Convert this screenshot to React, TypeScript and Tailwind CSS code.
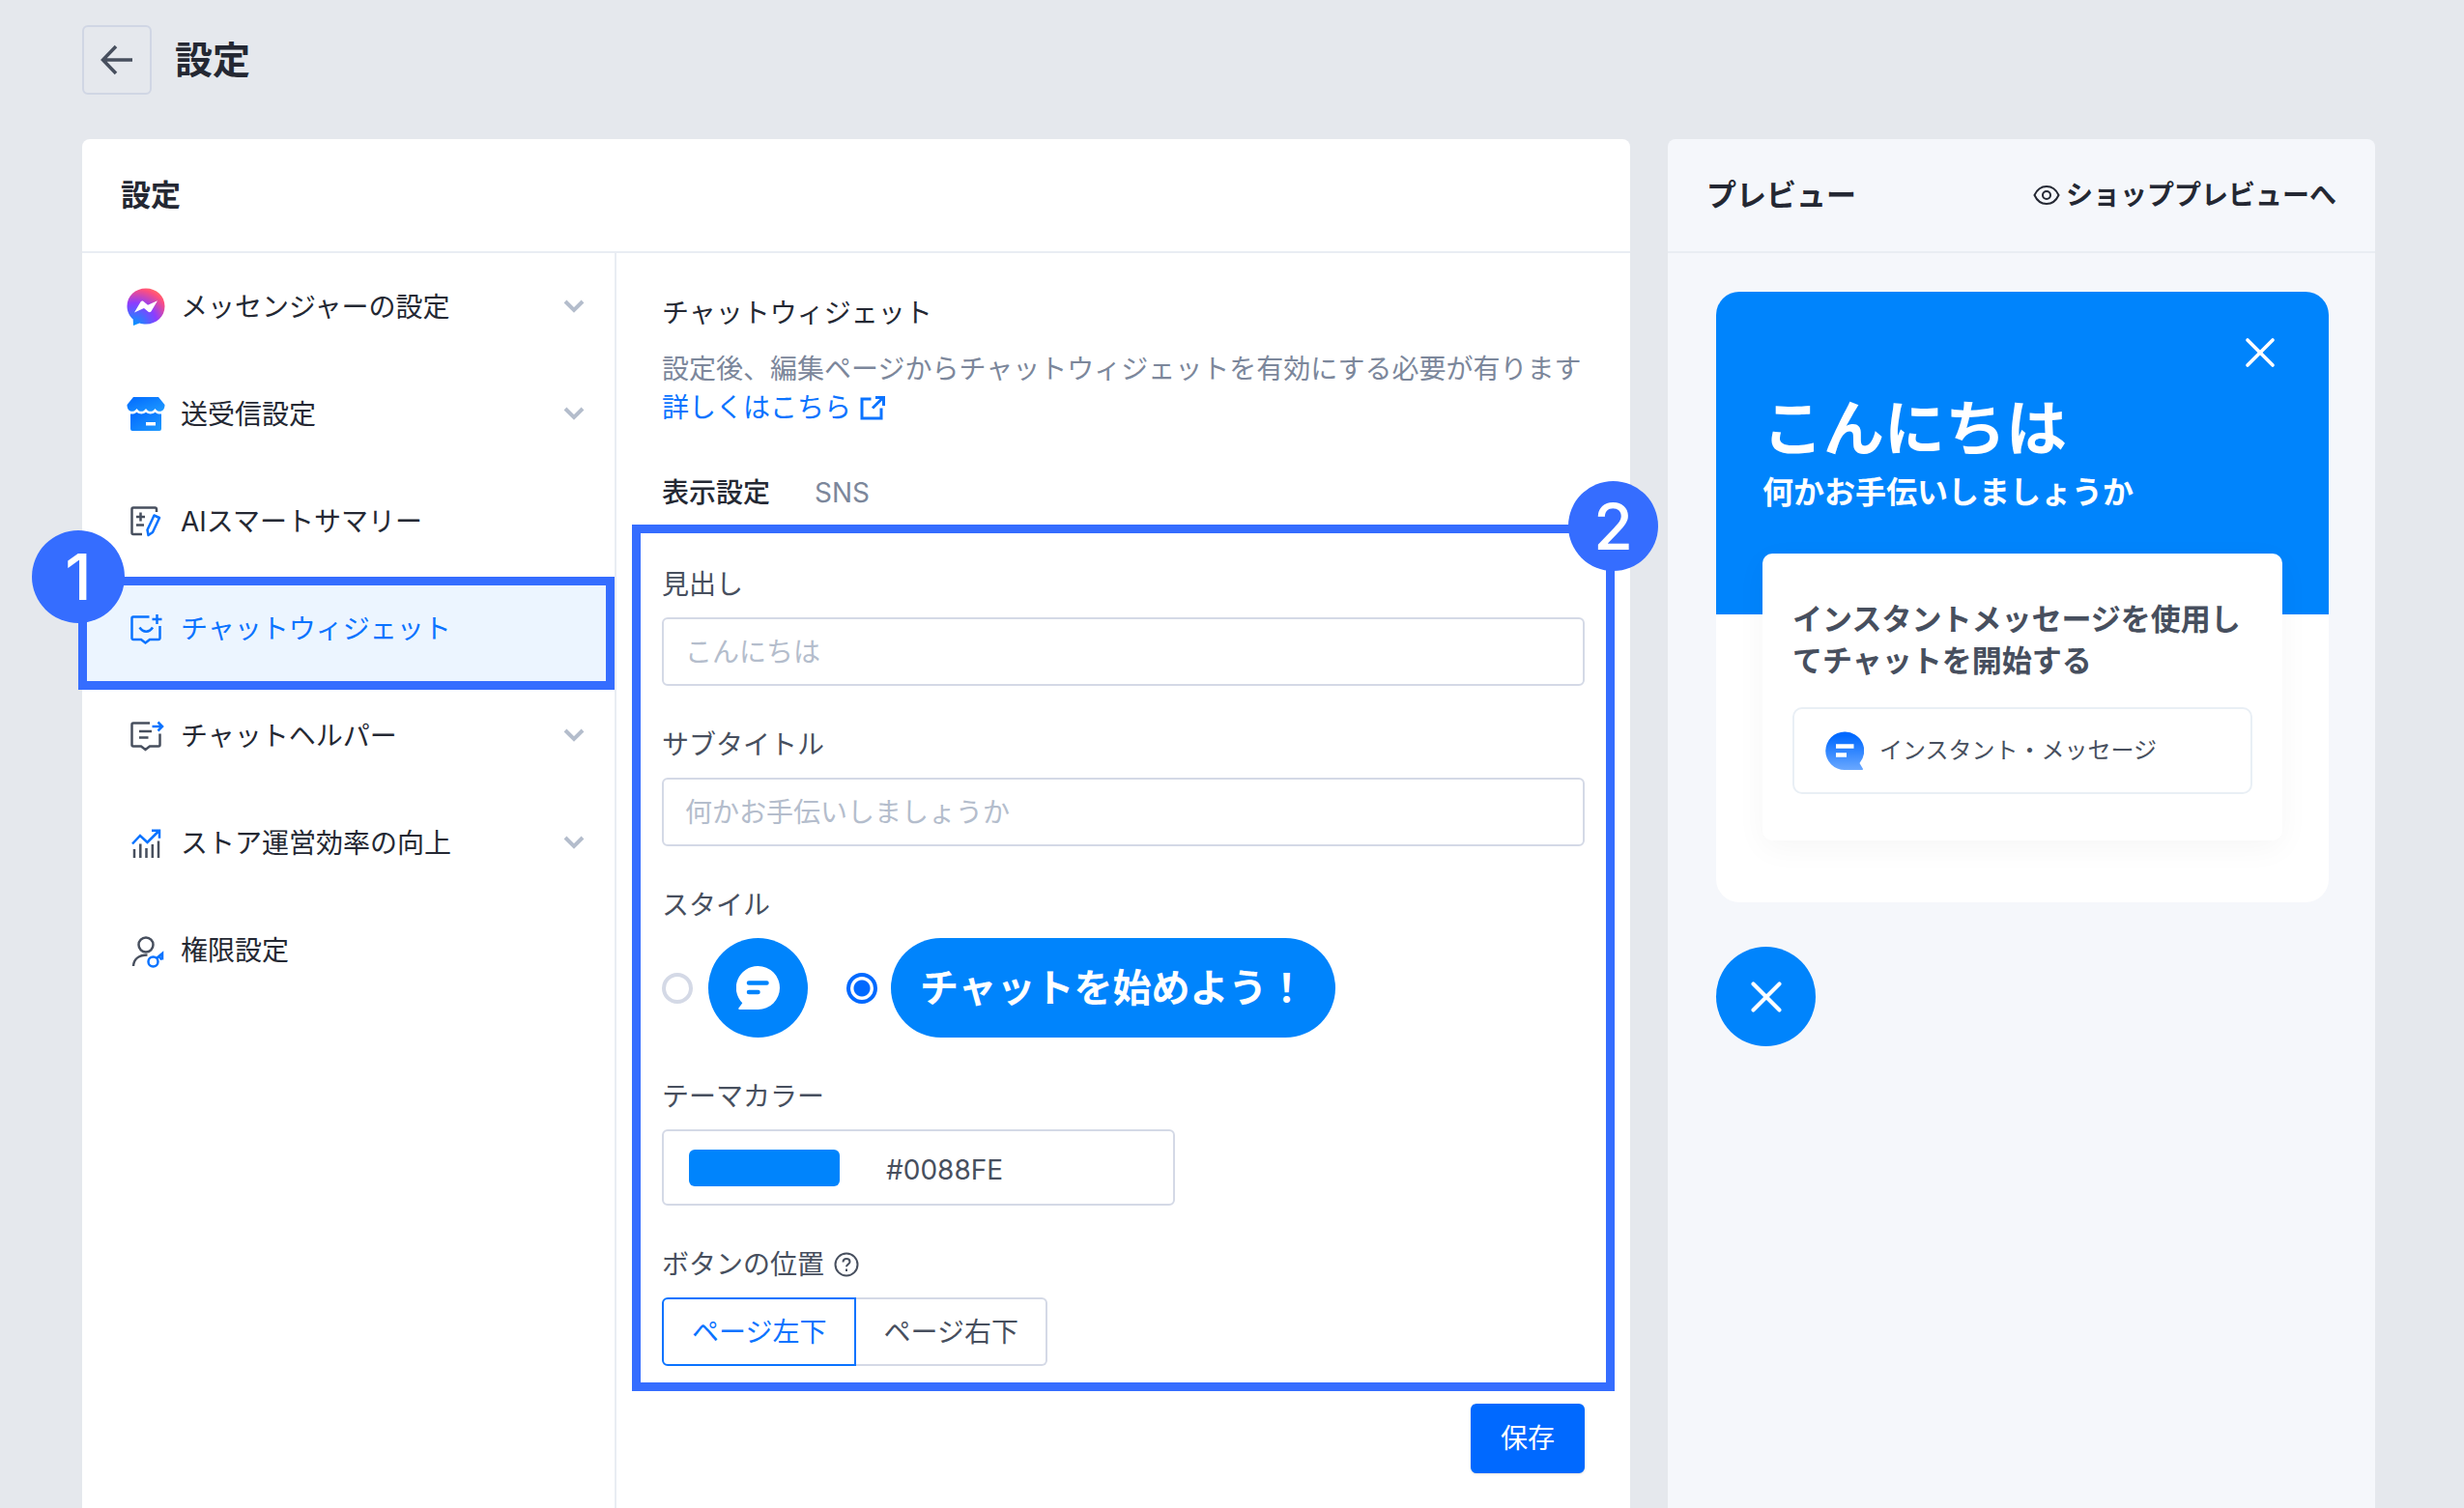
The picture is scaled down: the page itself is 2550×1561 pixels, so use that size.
import { useState } from 'react'
import { X } from 'lucide-react'

const INK = '#474f5e'
const BLUE = '#0a73ff'

function MessengerIcon() {
  return (
    <svg viewBox="0 0 40 40" className="size-10">
      <defs>
        <radialGradient id="messenger" cx="0.2" cy="1" r="1.1">
          <stop offset="0" stopColor="#0099ff" />
          <stop offset="0.55" stopColor="#8b3dff" />
          <stop offset="0.9" stopColor="#ff4f7d" />
          <stop offset="1" stopColor="#ff6968" />
        </radialGradient>
      </defs>
      <path
        fill="url(#messenger)"
        d="M20 0.5C9 0.5 0.5 8.3 0.5 19c0 5.600 2.400 10.200 6.200 13.400L7 39l6.400-2.600c2 .6 4.300 1.100 6.600 1.100 11 0 19.500-7.800 19.500-18.500S31 0.500 20 0.500Z"
      />
      <path fill="#fff" d="M8 25.500 14.500 14.500c.8-1.200 2-1.400 3-.6l4.500 3.800L32 13.200 25.500 24.200c-.8 1.200-2 1.400-3 .6L18 21Z" />
    </svg>
  )
}

function StoreIcon() {
  return (
    <svg viewBox="0 0 40 40" className="size-10">
      <defs>
        <linearGradient id="store" x1="0" y1="0" x2="1" y2="1">
          <stop offset="0" stopColor="#0069ff" />
          <stop offset="1" stopColor="#1f9bff" />
        </linearGradient>
      </defs>
      <path
        fill="url(#store)"
        d="M7 2h26l6.500 8c0 4-2 6.800-5 6.800-2 0-3.500-.8-5-2.800-1.500 2-3 2.800-4.800 2.800S21.500 16 20 14c-1.500 2-3 2.800-4.800 2.800S12 16 10.500 14c-1.500 2-3 2.800-5 2.800-3 0-5-2.800-5-6.800Z"
      />
      <path fill="url(#store)" d="M4 19.500c2.500.3 4.600-.3 6.500-1.800 3 2.300 6.500 2.300 9.500 0 3 2.300 6.500 2.300 9.500 0 1.900 1.500 4 2.100 6.500 1.800V35a2 2 0 0 1-2 2H6a2 2 0 0 1-2-2Z" />
      <path fill="#fff" d="M20 28h10v3.500H20z" />
    </svg>
  )
}

function SummaryIcon() {
  return (
    <svg viewBox="0 0 40 40" fill="none" stroke={INK} strokeWidth="2.500" className="size-10">
      <path d="M31 10V7a1.500 1.500 0 0 0-1.500-1.500H7A1.500 1.500 0 0 0 5.500 7v24.500A1.500 1.500 0 0 0 7 33h9" />
      <path d="M10 15h9M14.500 10.500v9M10 23.500h8" />
      <path stroke={BLUE} d="m28.500 13.500 5.500 2.500-7 15-4.500 3-1-5.500Z" strokeLinejoin="round" />
    </svg>
  )
}

function WidgetIcon() {
  return (
    <svg viewBox="0 0 40 40" fill="none" stroke={BLUE} strokeWidth="2.500" className="size-10">
      <path d="M23.500 7.500H7A1.500 1.500 0 0 0 5.500 9v20.500A1.500 1.500 0 0 0 7 31h8l4.500 3.500L24 31h9a1.500 1.500 0 0 0 1.500-1.500V17" />
      <path d="M13.500 18.500c3.500 5.500 10 5.500 13.500 0M31.500 5v10M26.500 10h10" />
    </svg>
  )
}

function HelperIcon() {
  return (
    <svg viewBox="0 0 40 40" fill="none" stroke={INK} strokeWidth="2.500" className="size-10">
      <path d="M24 6.500H7A1.500 1.500 0 0 0 5.500 8v21A1.500 1.500 0 0 0 7 30.500h8l4.500 3.500 4.500-3.500h9a1.500 1.500 0 0 0 1.500-1.500V17.500" />
      <path d="M13 15h13M13 21.500h9.500" />
      <path stroke={BLUE} d="M26.500 10H37M32.500 5.500 37 10l-4.500 4.500" />
    </svg>
  )
}

function ChartIcon() {
  return (
    <svg viewBox="0 0 40 40" fill="none" stroke={INK} strokeWidth="2.500" className="size-10">
      <path d="M8 35v-9M14.300 35V20.500M20.500 35V25M26.800 35V21M33 35V17.500" />
      <path stroke={BLUE} d="M6 20.500 14 12l7.500 7L33 7.500M26 6.800h8v8" />
    </svg>
  )
}

function PermissionIcon() {
  return (
    <svg viewBox="0 0 40 40" fill="none" stroke={INK} strokeWidth="2.500" className="size-10">
      <circle cx="20" cy="14" r="7.500" />
      <path d="M7 36c.5-7 5.500-11.500 14.500-11.500" />
      <g stroke={BLUE}>
        <circle cx="27.500" cy="31.500" r="5" />
        <path d="m31 28 6-5v6.500M33.500 26l3 3.500" />
      </g>
    </svg>
  )
}

function BubbleIcon({ className }: { className?: string }) {
  return (
    <svg viewBox="0 0 45 45" className={className}>
      <path fill="#fff" d="M22.500 0a22.500 22.500 0 0 1 0 45H3.500c-1.500 0-1.500-1.500-.5-2.300L6.300 38.300A22.500 22.500 0 0 1 22.500 0Z" />
      <path stroke="#0084fc" strokeWidth="4.500" strokeLinecap="round" d="M13 17.500h18.500M13 27h9.500" />
    </svg>
  )
}

function InstantIcon() {
  return (
    <svg viewBox="0 0 40 40" className="size-10 shrink-0">
      <defs>
        <linearGradient id="instant" x1="0" y1="0" x2="0" y2="1">
          <stop offset="0.100" stopColor="#0069ff" />
          <stop offset="1" stopColor="#6aa8ff" />
        </linearGradient>
      </defs>
      <path fill="url(#instant)" d="M20 0.500A19.700 19.700 0 0 0 20 40h18c1.200 0 1.400-1 .6-1.800L35.500 33A19.700 19.700 0 0 0 20 0.500Z" />
      <path stroke="#fff" strokeWidth="4.500" d="M11 15.500h18.500M11 24.500h11" />
    </svg>
  )
}

const MENU = [
  { label: 'メッセンジャーの設定', icon: <MessengerIcon />, expandable: true },
  { label: '送受信設定', icon: <StoreIcon />, expandable: true },
  { label: 'AIスマートサマリー', icon: <SummaryIcon /> },
  { label: 'チャットウィジェット', icon: <WidgetIcon />, active: true },
  { label: 'チャットヘルパー', icon: <HelperIcon />, expandable: true },
  { label: 'ストア運営効率の向上', icon: <ChartIcon />, expandable: true },
  { label: '権限設定', icon: <PermissionIcon /> },
]

const RADIO =
  'size-8 shrink-0 appearance-none rounded-full border-4 border-[#d4d9e6] bg-white checked:border-[#0069ff] checked:bg-[radial-gradient(circle,#0069ff_8px,#ffffff_9px)]'
const FIELD =
  'h-[71px] w-full rounded-md border-2 border-[#d4d9e6] bg-white px-[22px] text-[28px] text-[#474f5e] placeholder:text-[#b4bdcc]'

function Sidebar() {
  return (
    <nav className="w-[553px] shrink-0 border-r-2 border-[#e9edf3] pt-1">
      <ul>
        {MENU.map(item => (
          <li key={item.label} className="relative">
            <button
              type="button"
              className={
                item.active
                  ? 'flex h-[111px] w-full items-center gap-4 bg-[#ecf5ff] pr-[30px] pb-2 pl-[46px] text-left text-[#0a73ff]'
                  : 'flex h-[111px] w-full items-center gap-4 pr-[30px] pb-2 pl-[46px] text-left text-[#242833]'
              }
            >
              {item.icon}
              <span className="flex-1">{item.label}</span>
              {item.expandable && (
                <svg viewBox="0 0 24 24" fill="none" stroke="#b4bdcc" strokeWidth="4" className="size-6">
                  <path d="m3 6 9 9 9-9" />
                </svg>
              )}
            </button>
            {item.active && (
              <>
                <div className="pointer-events-none absolute -top-0.5 right-0 -bottom-1 -left-1 border-9 border-[#356dff]" />
                <span className="absolute -top-[50px] -left-[52px] flex size-24 items-center justify-center rounded-full bg-[#356dff] text-[66px] leading-none font-medium text-white">
                  1
                </span>
              </>
            )}
          </li>
        ))}
      </ul>
    </nav>
  )
}

function WidgetForm() {
  const [style, setStyle] = useState('label')
  const [position, setPosition] = useState('left')
  const [color, setColor] = useState('#0084fc')

  return (
    <form className="relative mx-4 mt-[13px] flex flex-col gap-[41px] border-9 border-[#356dff] px-[22px] pt-[33px] pb-[17px] text-[#474f5e]">
      <span className="absolute -top-[54px] -right-[54px] flex size-[93px] items-center justify-center rounded-full bg-[#356dff] text-[66px] leading-none font-medium text-white">
        2
      </span>

      <div className="flex flex-col gap-[14px]">
        <label htmlFor="heading">見出し</label>
        <input id="heading" type="text" placeholder="こんにちは" className={FIELD} />
      </div>

      <div className="flex flex-col gap-[14px]">
        <label htmlFor="subtitle">サブタイトル</label>
        <input id="subtitle" type="text" placeholder="何かお手伝いしましょうか" className={FIELD} />
      </div>

      <fieldset>
        <legend className="mb-[14px]">スタイル</legend>
        <div className="flex gap-10">
          <label className="flex items-center gap-4">
            <input
              type="radio"
              name="style"
              aria-label="アイコン"
              checked={style === 'icon'}
              onChange={() => setStyle('icon')}
              className={RADIO}
            />
            <span className="flex size-[103px] items-center justify-center rounded-full bg-[#0084fc]">
              <BubbleIcon className="size-[45px]" />
            </span>
          </label>
          <label className="flex items-center gap-[14px]">
            <input
              type="radio"
              name="style"
              checked={style === 'label'}
              onChange={() => setStyle('label')}
              className={RADIO}
            />
            <span className="flex h-[103px] items-center rounded-full bg-[#0084fc] px-[30px] text-[40px] font-bold text-white">
              チャットを始めよう！
            </span>
          </label>
        </div>
      </fieldset>

      <div className="flex flex-col gap-[14px]">
        <label htmlFor="color">テーマカラー</label>
        <div className="flex h-[79px] w-[531px] items-center rounded-md border-2 border-[#d4d9e6] pl-[26px]">
          <input
            id="color"
            type="color"
            value={color}
            onChange={e => setColor(e.target.value)}
            className="h-[38px] w-[156px] appearance-none overflow-hidden rounded-md [&::-webkit-color-swatch]:border-0 [&::-webkit-color-swatch-wrapper]:p-0"
          />
          <span className="pt-1 pl-12">#0088FE</span>
        </div>
      </div>

      <fieldset>
        <legend className="mb-[14px] flex items-center gap-[10px]">
          ボタンの位置
          <svg viewBox="0 0 26 26" fill="none" stroke={INK} strokeWidth="2" className="size-[26px]">
            <circle cx="13" cy="13" r="11.500" />
            <path d="M9.500 10.500c0-2 1.500-3.500 3.500-3.500s3.500 1.300 3.500 3.200c0 2.300-3.500 2.500-3.500 5M13 17.500v2.500" />
          </svg>
        </legend>
        <div className="flex">
          <button
            type="button"
            aria-pressed={position === 'left'}
            onClick={() => setPosition('left')}
            className="relative h-[71px] rounded-l-md border-2 border-[#0a73ff] px-[29px] text-[#0a73ff]"
          >
            ページ左下
          </button>
          <button
            type="button"
            aria-pressed={position === 'right'}
            onClick={() => setPosition('right')}
            className="h-[71px] rounded-r-md border-2 border-l-0 border-[#d4d9e6] px-7"
          >
            ページ右下
          </button>
        </div>
      </fieldset>
    </form>
  )
}

function SettingsPanel() {
  return (
    <section className="flex min-w-0 flex-1 flex-col rounded-t-lg bg-white">
      <div className="flex h-[118px] items-center border-b-2 border-[#e9edf3] px-10">
        <h2 className="text-[31px] font-bold">設定</h2>
      </div>
      <div className="flex flex-1">
        <Sidebar />
        <div className="min-w-0 flex-1 pt-[42px]">
          <div className="px-[47px]">
            <h3>チャットウィジェット</h3>
            <p className="mt-[18px] text-[#7c879b]">
              設定後、編集ページからチャットウィジェットを有効にする必要が有ります
              <br />
              <a href="#help" className="inline-flex items-center gap-2 text-[#0a73ff]">
                詳しくはこちら
                <svg viewBox="0 0 28 28" fill="none" stroke="currentColor" strokeWidth="3" className="size-7">
                  <path d="M12.500 5H3v20h20V14.500M14 14.500 25 3.500M17 3.500h8.500V12" />
                </svg>
              </a>
            </p>
            <div role="tablist" className="mt-12 flex gap-[46px]">
              <button type="button" role="tab" aria-selected="true" className="font-medium">
                表示設定
              </button>
              <button type="button" role="tab" aria-selected="false" className="text-[#7c879b]">
                SNS
              </button>
            </div>
          </div>
          <WidgetForm />
          <div className="mt-[13px] flex justify-end px-[47px]">
            <button
              type="button"
              className="h-[72px] rounded-md bg-[#0069ff] px-[31px] text-white shadow-sm"
            >
              保存
            </button>
          </div>
        </div>
      </div>
    </section>
  )
}

function PreviewPanel() {
  return (
    <section className="w-[732px] shrink-0 rounded-t-lg bg-[#f5f7fb]">
      <div className="flex h-[118px] items-center justify-between border-b-2 border-[#e9edf3] px-10">
        <h2 className="text-[31px] font-bold">プレビュー</h2>
        <a href="#preview" className="flex items-center gap-[6px] font-bold">
          <svg viewBox="0 0 28 28" fill="none" stroke="currentColor" strokeWidth="2" className="size-7">
            <path d="M1.500 14C4 8.500 8.500 5 14 5s10 3.500 12.500 9C24 19.500 19.500 23 14 23S4 19.500 1.500 14Z" />
            <circle cx="14" cy="14" r="4" />
          </svg>
          ショッププレビューへ
        </a>
      </div>

      <div className="pt-10 pr-12 pl-[50px]">
        <div className="overflow-hidden rounded-3xl bg-white pb-16">
          <div className="bg-[#0084fc] pt-[37px] pb-[104px] pl-12 text-white">
            <div className="flex justify-end pr-[45px]">
              <button type="button" aria-label="閉じる">
                <X size={52} strokeWidth={1.7} />
              </button>
            </div>
            <h3 className="mt-3 text-[63px] leading-[80px] font-bold">こんにちは</h3>
            <p className="mt-[5px] text-[32px] leading-[44px] font-bold">何かお手伝いしましょうか</p>
          </div>
          <div className="relative mx-12 -mt-[63px] rounded-[10px] bg-white px-[31px] pt-[46px] pb-12 shadow-[0_8px_32px_rgba(0,0,0,0.04)]">
            <h4 className="text-[31px] leading-[43px] font-bold text-[#474f5e]">
              インスタントメッセージを使用してチャットを開始する
            </h4>
            <button
              type="button"
              className="mt-[27px] flex h-[90px] w-full items-center gap-4 rounded-[10px] border-2 border-[#e9eff5] px-8 text-[24px] text-[#474f5e]"
            >
              <InstantIcon />
              インスタント・メッセージ
            </button>
          </div>
        </div>
        <button
          type="button"
          aria-label="ウィジェットを閉じる"
          className="mt-[46px] flex size-[103px] items-center justify-center rounded-full bg-[#0084fc] text-white"
        >
          <X size={54} strokeWidth={1.8} />
        </button>
      </div>
    </section>
  )
}

export default function App() {
  return (
    <div className="flex min-h-screen flex-col bg-[#e5e8ed] pt-[26px] pr-[92px] pl-[85px] font-[Inter,'Noto_Sans_CJK_JP',sans-serif] text-[28px] leading-10 text-[#242833]">
      <header className="flex items-center gap-6">
        <button
          type="button"
          aria-label="戻る"
          className="flex size-[72px] items-center justify-center rounded-md border-2 border-[#d0d6e4]"
        >
          <svg viewBox="0 0 34 34" fill="none" stroke={INK} strokeWidth="3.500" className="size-[34px]">
            <path d="M33 17H3M16 3 2.500 17 16 31" />
          </svg>
        </button>
        <h1 className="text-[39px] font-bold">設定</h1>
      </header>
      <main className="mt-[46px] flex flex-1 gap-[39px]">
        <SettingsPanel />
        <PreviewPanel />
      </main>
    </div>
  )
}
